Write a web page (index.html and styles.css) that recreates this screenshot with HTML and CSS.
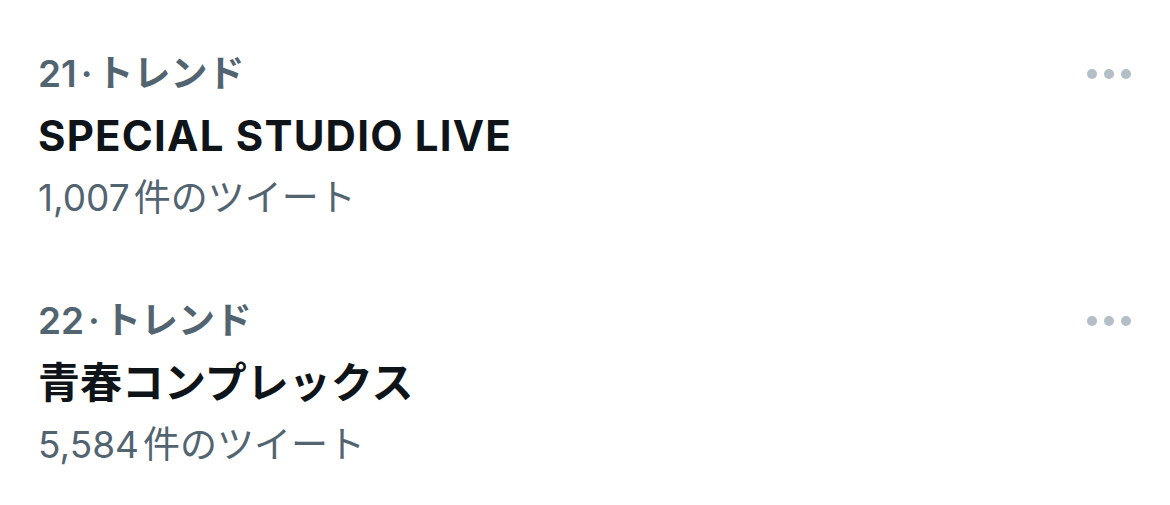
FILE: index.html
```html
<!DOCTYPE html>
<html lang="ja">

    <head>
        <meta charset="UTF-8">
        <meta name="viewport" content="width=device-width, initial-scale=1.0">
        <title>トレンド</title>

        <link rel="stylesheet" href="styles.css">
    </head>

    <body>
        <main class="trends">
            <div class="trend">
                <div class="info">
                    <div class="meta">21<span class="sep">·</span>トレンド</div>
                    <div class="title latin">SPECIAL STUDIO LIVE</div>
                    <div class="count"><span class="num">1,007</span>件のツイート</div>
                </div>
                <button class="more" title="その他"><span></span><span></span><span></span></button>
            </div>

            <div class="trend">
                <div class="info">
                    <div class="meta">22<span class="sep">·</span>トレンド</div>
                    <div class="title">青春コンプレックス</div>
                    <div class="count"><span class="num">5,584</span>件のツイート</div>
                </div>
                <button class="more" title="その他"><span></span><span></span><span></span></button>
            </div>
        </main>
    </body>

</html>
```

FILE: styles.css
```css
* {
    box-sizing: border-box;
}

body,
html {
    margin: 0;
    padding: 0;
    width: 100%;
    background-color: #fff;
    font-family: Inter, 'Noto Sans CJK JP', sans-serif;
}

.trends {
    display: flex;
    flex-direction: column;
    gap: 63px;
    padding: 44px 39px 0 38px;
}

.trend {
    display: flex;
    justify-content: space-between;
    align-items: flex-start;
}

.meta {
    color: #536471;
    font-size: 37px;
    font-weight: 600;
    line-height: 60px;
}

.meta .sep {
    margin: 0 4px;
}

.title {
    color: #0f1419;
    font-size: 42px;
    font-weight: 700;
    line-height: 64px;
}

.title.latin {
    letter-spacing: 1.2px;
}

.count {
    color: #536471;
    font-size: 37px;
    font-weight: 400;
    line-height: 60px;
}

.count .num {
    margin-right: 4px;
}

.more {
    display: flex;
    align-items: center;
    gap: 7px;
    height: 60px;
    padding: 0;
    border: none;
    background: none;
    cursor: pointer;
}

.more span {
    display: block;
    width: 10px;
    height: 10px;
    border-radius: 50%;
    background-color: #b3bec6;
}
```
